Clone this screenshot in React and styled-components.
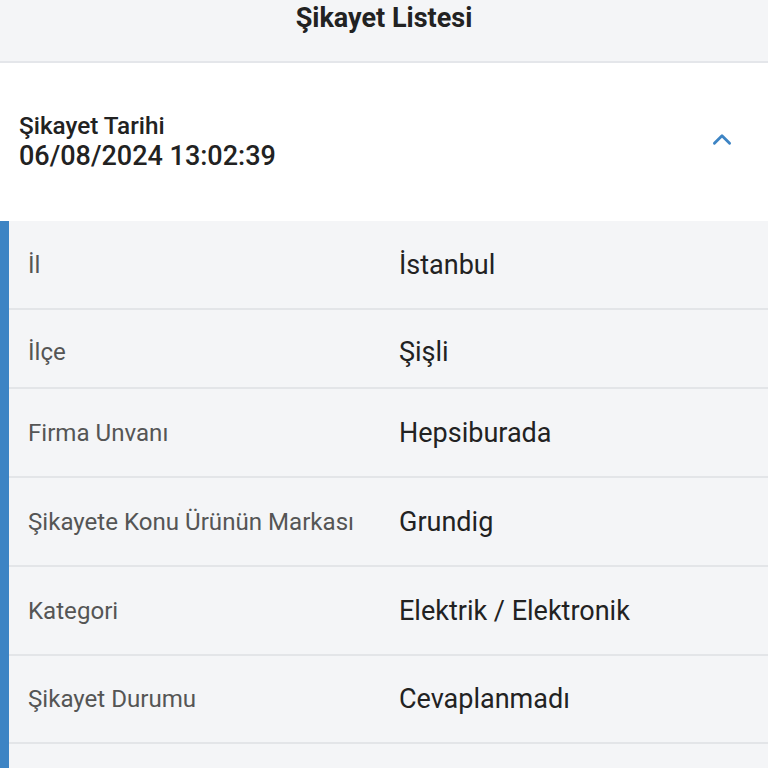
import React from "react";
import styled, { createGlobalStyle } from "styled-components";

const GlobalStyle = createGlobalStyle`
  body {
    margin: 0;
    background: #f4f5f7;
    font-family: Roboto, "Noto Sans", sans-serif;
  }
`;

const Page = styled.div`
  width: 768px;
  height: 768px;
  overflow: hidden;
  background: #f4f5f7;
`;

const Header = styled.div`
  height: 63px;
  display: flex;
  justify-content: center;
  padding-top: 2px;
  box-sizing: border-box;
  border-bottom: 2px solid #e4e6ea;
  font-size: 27px;
  font-weight: 700;
  color: #222;
`;

const Card = styled.div`
  background: #fff;
  height: 158px;
  display: flex;
  align-items: center;
  justify-content: space-between;
  padding: 0 33px 0 19px;
`;

const CardTitle = styled.div`
  display: flex;
  flex-direction: column;
  color: #222;
`;

const CardLabel = styled.div`
  font-size: 24.3px;
  font-weight: 500;
  line-height: 28px;
`;

const CardDate = styled.div`
  font-size: 27px;
  font-weight: 500;
  line-height: 32px;
`;

const Chevron = styled.svg`
  width: 26px;
  height: 26px;
  margin-bottom: 4px;
`;

const List = styled.div`
  border-left: 9px solid #3d84c4;
`;

const Row = styled.div`
  display: grid;
  grid-template-columns: 371px 1fr;
  align-items: center;
  height: ${(p) => p.h}px;
  padding-left: 19px;
  padding-top: ${(p) => p.down || 0}px;
  border-bottom: 2px solid #e3e5e8;
  box-sizing: border-box;
`;

const Label = styled.div`
  font-size: 24.1px;
  color: #555;
`;

const Value = styled.div`
  font-size: 27px;
  color: #222;
`;

const rows = [
  { label: "İl", value: "İstanbul", h: 89 },
  { label: "İlçe", value: "Şişli", h: 79, down: 6 },
  { label: "Firma Unvanı", value: "Hepsiburada", h: 89 },
  { label: "Şikayete Konu Ürünün Markası", value: "Grundig", h: 89 },
  { label: "Kategori", value: "Elektrik / Elektronik", h: 89 },
  { label: "Şikayet Durumu", value: "Cevaplanmadı", h: 88 },
  { label: "", value: "", h: 88 },
];

const App = () => {
  return (
    <Page>
      <GlobalStyle />
      <Header>Şikayet Listesi</Header>
      <Card>
        <CardTitle>
          <CardLabel>Şikayet Tarihi</CardLabel>
          <CardDate>06/08/2024 13:02:39</CardDate>
        </CardTitle>
        <Chevron viewBox="0 0 24 24" fill="none" stroke="#3d84c4" strokeWidth="2.6" strokeLinecap="round" strokeLinejoin="round">
          <path d="M5 15l7-7 7 7" />
        </Chevron>
      </Card>
      <List>
        {rows.map((r, i) => (
          <Row key={i} h={r.h} down={r.down}>
            <Label>{r.label}</Label>
            <Value>{r.value}</Value>
          </Row>
        ))}
      </List>
    </Page>
  );
};

export default App;
